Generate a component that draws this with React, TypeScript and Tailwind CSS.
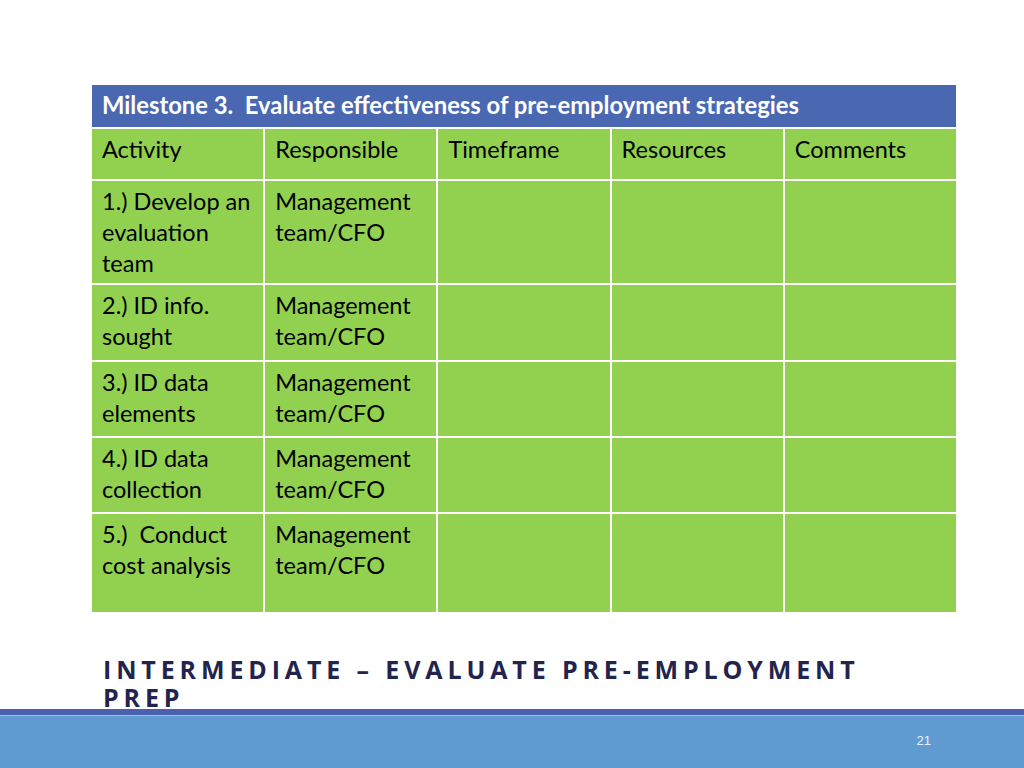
import React from "react"

const rows: { activity: string[]; who: string[]; h: string }[] = [
  { activity: ["1.) Develop an", "evaluation", "team"], who: ["Management", "team/CFO"], h: "h-[102px]" },
  { activity: ["2.) ID info.", "sought"], who: ["Management", "team/CFO"], h: "h-[75px]" },
  { activity: ["3.) ID data", "elements"], who: ["Management", "team/CFO"], h: "h-[74px]" },
  { activity: ["4.) ID data", "collection"], who: ["Management", "team/CFO"], h: "h-[74px]" },
  { activity: ["5.)  Conduct", "cost analysis"], who: ["Management", "team/CFO"], h: "h-[98px]" },
]

const heads = ["Activity", "Responsible", "Timeframe", "Resources", "Comments"]

function Cell({ lines }: { lines?: string[] }) {
  return (
    <div className="bg-[#92d050] pl-[10px] pt-[5px] text-[23.5px] leading-[31px] text-black whitespace-pre">
      {lines?.map((l, i) => (
        <div key={i}>{l}</div>
      ))}
    </div>
  )
}

export default function App() {
  return (
    <div
      className="relative flex h-[768px] w-[1024px] flex-col overflow-hidden bg-white"
      style={{ fontFamily: "Lato, 'Open Sans', sans-serif" }}
    >
      {/* table */}
      <div className="ml-[92px] mt-[85px] flex w-[864px] flex-col gap-[2px] bg-white">
        <div className="flex h-[42px] items-center bg-[#4a68b2] pl-[10px] text-[23.8px] font-bold text-white whitespace-pre">
          {"Milestone 3.  Evaluate effectiveness of pre-employment strategies"}
        </div>
        <div className="grid h-[50px] grid-cols-5 gap-[2px]">
          {heads.map((h) => (
            <div key={h} className="bg-[#92d050] pl-[10px] pt-[5px] text-[23.5px] leading-[31px] text-black">
              {h}
            </div>
          ))}
        </div>
        {rows.map((r, i) => (
          <div key={i} className={`grid grid-cols-5 gap-[2px] ${r.h}`}>
            <Cell lines={r.activity} />
            <Cell lines={r.who} />
            <Cell />
            <Cell />
            <Cell />
          </div>
        ))}
      </div>

      {/* slide title */}
      <div
        className="ml-[103px] mt-[43px] h-[52px] shrink-0 text-[25px] font-bold uppercase leading-[28px] tracking-[0.195em] text-[#23244d]"
        style={{ fontFamily: "'Open Sans', sans-serif" }}
      >
        INTERMEDIATE – EVALUATE PRE-EMPLOYMENT
        <br />
        PREP
      </div>

      {/* footer band */}
      <div className="mt-auto flex h-[59px] shrink-0 flex-col">
        <div className="h-[6px] bg-[#4a62ad]" />
        <div className="h-[1px] bg-[#9dbde4]" />
        <div className="flex flex-1 items-center justify-end bg-[#5f9bd0] pr-[93px] pb-[2px]">
          <span className="text-[13px] text-[#eef3fb]" style={{ fontFamily: "'Liberation Sans', sans-serif" }}>
            21
          </span>
        </div>
      </div>
    </div>
  )
}
